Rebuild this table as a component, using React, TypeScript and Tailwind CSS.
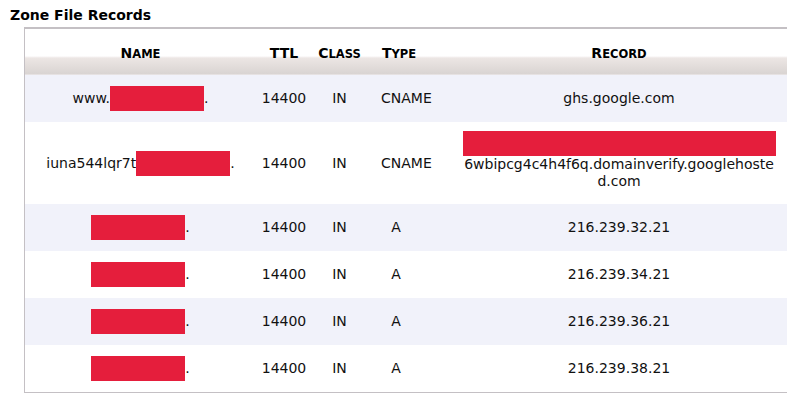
import React from "react";

const font = { fontFamily: '"DejaVu Sans", Verdana, sans-serif' };

type Row = { pre: string; red: number; ttl: string; type: string; record: React.ReactNode; tall?: boolean };

const Red = ({ w }: { w: number }) => (
  <span className="inline-block h-[25px] bg-[#e51e3c] align-middle" style={{ width: w }} />
);

const rows: Row[] = [
  { pre: "www.", red: 94, ttl: "14400", type: "CNAME", record: "ghs.google.com" },
  {
    pre: "iuna544lqr7t",
    red: 94,
    ttl: "14400",
    type: "CNAME",
    tall: true,
    record: (
      <div className="flex flex-col items-center mb-[5px]">
        <div className="h-[25px] w-[313px] bg-[#e51e3c]" />
        <div className="w-[313px] break-all leading-[17px] text-center">6wbipcg4c4h4f6q.domainverify.googlehosted.com</div>
      </div>
    ),
  },
  { pre: "", red: 94, ttl: "14400", type: "A", record: "216.239.32.21" },
  { pre: "", red: 94, ttl: "14400", type: "A", record: "216.239.34.21" },
  { pre: "", red: 94, ttl: "14400", type: "A", record: "216.239.36.21" },
  { pre: "", red: 94, ttl: "14400", type: "A", record: "216.239.38.21" },
];

const SC = ({ first, rest }: { first: string; rest: string }) => (
  <span>
    <span className="text-[14px]">{first}</span>
    <span className="text-[11.5px]">{rest}</span>
  </span>
);

export default function App() {
  return (
    <div className="w-[787px] h-[405px] overflow-hidden bg-white text-[#111]" style={font}>
      <div className="pl-[10px] pt-[7px] text-[14px] font-bold leading-[17px] text-black">Zone File Records</div>
      <div className="ml-[24px] mt-[3px] w-[790px] border-l border-t-2 border-b border-[#c4c0c4]">
        <div className="flex h-[46px] items-start bg-[linear-gradient(to_bottom,#ffffff_0px,#ffffff_27px,#ece6e4_29px,#d9d4d2_45px,#f4f0f2_46px)] text-[14px] leading-[17px] font-bold text-black">
          <div className="w-[231px] pt-[16px] text-center"><SC first="N" rest="AME" /></div>
          <div className="w-[56px] pt-[16px] text-center">TTL</div>
          <div className="w-[55px] pt-[16px] text-center"><SC first="C" rest="LASS" /></div>
          <div className="w-[64px] pt-[16px] text-center"><SC first="T" rest="YPE" /></div>
          <div className="w-[376px] pt-[16px] text-center"><SC first="R" rest="ECORD" /></div>
        </div>
        {rows.map((r, i) => (
          <div
            key={i}
            className={`flex items-center text-[14px] ${r.tall ? "h-[82px]" : "h-[47px]"} ${i % 2 === 0 ? "bg-[#f1f2fa]" : "bg-white"}`}
          >
            <div className="w-[231px] flex items-center justify-center">
              <span>{r.pre}</span>
              <Red w={r.red} />
              <span>.</span>
            </div>
            <div className="w-[56px] text-center">{r.ttl}</div>
            <div className="w-[55px] text-center">IN</div>
            <div className={`w-[64px] ${r.type === "A" ? "text-center pr-[6px]" : "pl-[14px]"}`}>{r.type}</div>
            <div className="w-[376px] text-center flex justify-center">{r.record}</div>
          </div>
        ))}
      </div>
    </div>
  );
}
